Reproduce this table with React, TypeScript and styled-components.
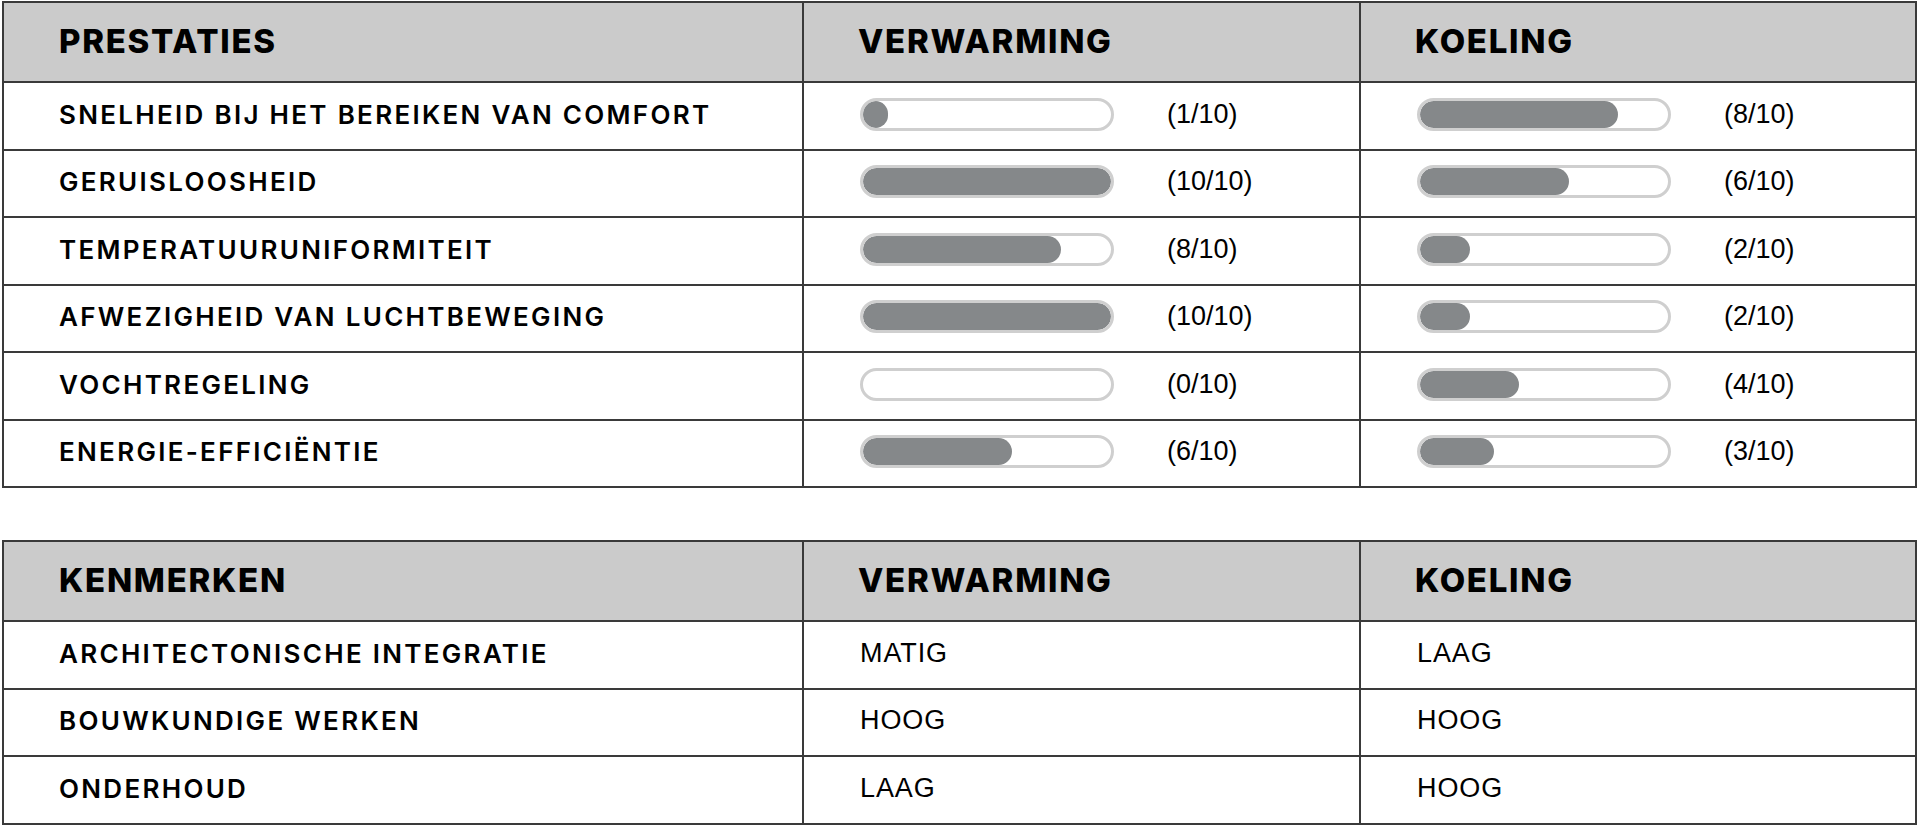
import React from "react";
import styled, { createGlobalStyle } from "styled-components";

const GlobalStyle = createGlobalStyle`
  html, body { margin: 0; padding: 0; background: #ffffff; }
  body { font-family: "Inter", "Liberation Sans", Arial, sans-serif; color: #000; }
`;

const Page = styled.div`
  display: flex;
  flex-direction: column;
  gap: 52px;
  padding: 1px 3px 0 2px;
  width: 1915px;
`;

const Table = styled.div`
  display: grid;
  grid-template-columns: 798px 557px 1fr;
  border: 2px solid #3a3a3a;
`;

const HeadCell = styled.div<{ $first?: boolean }>`
  height: 75px;
  padding-bottom: 3px;
  display: flex;
  align-items: center;
  padding-left: ${(p) => (p.$first ? "55px" : "54px")};
  background: #cbcbcb;
  border-bottom: 2px solid #3a3a3a;
  border-left: ${(p) => (p.$first ? "none" : "2px solid #3a3a3a")};
  font-family: "Inter", "Liberation Sans", sans-serif;
  font-weight: 800;
  font-size: 33px;
  letter-spacing: 1.7px;
`;

const Cell = styled.div<{ $first?: boolean; $last?: boolean }>`
  height: 62.5px;
  padding-bottom: 3px;
  display: flex;
  align-items: center;
  padding-left: ${(p) => (p.$first ? "55px" : "56px")};
  border-bottom: ${(p) => (p.$last ? "none" : "2px solid #3a3a3a")};
  border-left: ${(p) => (p.$first ? "none" : "2px solid #3a3a3a")};
`;

const Label = styled.span`
  font-family: "Inter", "Liberation Sans", sans-serif;
  font-weight: 600;
  font-size: 26px;
  letter-spacing: 2.3px;
`;

const Value = styled.span`
  font-family: "Liberation Sans", Arial, sans-serif;
  font-weight: 400;
  font-size: 27px;
  letter-spacing: 0.9px;
`;

const Score = styled.span`
  font-family: "Liberation Sans", Arial, sans-serif;
  font-size: 27px;
  margin-left: 53px;
`;

const Track = styled.div`
  width: 254px;
  height: 33px;
  box-sizing: border-box;
  border: 3px solid #cfcfcf;
  border-radius: 17px;
  background: #ffffff;
  overflow: hidden;
  flex-shrink: 0;
`;

const Fill = styled.div`
  height: 100%;
  background: #85888a;
  border-radius: 14px;
`;

type Perf = { label: string; heat: number; cool: number };

const perf: Perf[] = [
  { label: "SNELHEID BIJ HET BEREIKEN VAN COMFORT", heat: 1, cool: 8 },
  { label: "GERUISLOOSHEID", heat: 10, cool: 6 },
  { label: "TEMPERATUURUNIFORMITEIT", heat: 8, cool: 2 },
  { label: "AFWEZIGHEID VAN LUCHTBEWEGING", heat: 10, cool: 2 },
  { label: "VOCHTREGELING", heat: 0, cool: 4 },
  { label: "ENERGIE-EFFICIËNTIE", heat: 6, cool: 3 },
];

const feats = [
  { label: "ARCHITECTONISCHE INTEGRATIE", heat: "MATIG", cool: "LAAG" },
  { label: "BOUWKUNDIGE WERKEN", heat: "HOOG", cool: "HOOG" },
  { label: "ONDERHOUD", heat: "LAAG", cool: "HOOG" },
];

const Rating: React.FC<{ value: number }> = ({ value }) => (
  <>
    <Track>
      {value > 0 && <Fill style={{ width: `${value * 10}%` }} />}
    </Track>
    <Score>({value}/10)</Score>
  </>
);

export default function App() {
  return (
    <>
      <GlobalStyle />
      <Page>
        <Table>
          <HeadCell $first>PRESTATIES</HeadCell>
          <HeadCell>VERWARMING</HeadCell>
          <HeadCell>KOELING</HeadCell>
          {perf.map((r, i) => {
            const last = i === perf.length - 1;
            return (
              <React.Fragment key={r.label}>
                <Cell $first $last={last}>
                  <Label>{r.label}</Label>
                </Cell>
                <Cell $last={last}>
                  <Rating value={r.heat} />
                </Cell>
                <Cell $last={last}>
                  <Rating value={r.cool} />
                </Cell>
              </React.Fragment>
            );
          })}
        </Table>
        <Table>
          <HeadCell $first>KENMERKEN</HeadCell>
          <HeadCell>VERWARMING</HeadCell>
          <HeadCell>KOELING</HeadCell>
          {feats.map((r, i) => {
            const last = i === feats.length - 1;
            return (
              <React.Fragment key={r.label}>
                <Cell $first $last={last}>
                  <Label>{r.label}</Label>
                </Cell>
                <Cell $last={last}>
                  <Value>{r.heat}</Value>
                </Cell>
                <Cell $last={last}>
                  <Value>{r.cool}</Value>
                </Cell>
              </React.Fragment>
            );
          })}
        </Table>
      </Page>
    </>
  );
}
